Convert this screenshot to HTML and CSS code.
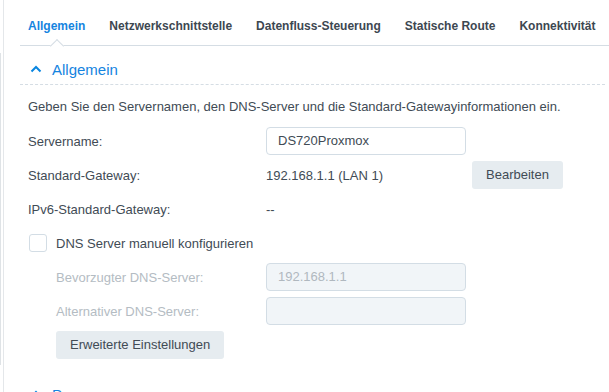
FILE: index.html
```html
<!DOCTYPE html>
<html lang="de">
<head>
<meta charset="utf-8">
<link rel="stylesheet" href="styles.css">
</head>
<body>
<div class="side-line"></div>
<div class="page">
  <div class="tabs">
    <div class="tab active">Allgemein<span class="notch"></span></div>
    <div class="tab">Netzwerkschnittstelle</div>
    <div class="tab">Datenfluss-Steuerung</div>
    <div class="tab">Statische Route</div>
    <div class="tab">Konnektivität</div>
  </div>
  <div class="section-head">
    <svg class="chev" width="12" height="8" viewBox="0 0 12 8"><path d="M1.5 6.5 L6 2 L10.5 6.5" fill="none" stroke="#0a86e0" stroke-width="2"/></svg>
    <span class="section-title">Allgemein</span>
  </div>
  <div class="content">
    <p class="desc">Geben Sie den Servernamen, den DNS-Server und die Standard-Gatewayinformationen ein.</p>
    <div class="row">
      <span class="label">Servername:</span>
      <div class="input">DS720Proxmox</div>
    </div>
    <div class="row">
      <span class="label">Standard-Gateway:</span>
      <span class="value">192.168.1.1 (LAN 1)</span>
      <span class="btn edit">Bearbeiten</span>
    </div>
    <div class="row">
      <span class="label">IPv6-Standard-Gateway:</span>
      <span class="value">--</span>
    </div>
    <div class="row check-row">
      <span class="checkbox"></span>
      <span class="check-label">DNS Server manuell konfigurieren</span>
    </div>
    <div class="row sub">
      <span class="label dim">Bevorzugter DNS-Server:</span>
      <div class="input disabled">192.168.1.1</div>
    </div>
    <div class="row sub">
      <span class="label dim">Alternativer DNS-Server:</span>
      <div class="input disabled"></div>
    </div>
    <div class="row sub btn-row">
      <span class="btn">Erweiterte Einstellungen</span>
    </div>
  </div>
  <div class="section-head next">
    <svg class="chev" width="12" height="8" viewBox="0 0 12 8"><path d="M1.5 6.5 L6 2 L10.5 6.5" fill="none" stroke="#0a86e0" stroke-width="2"/></svg>
    <span class="section-title">Proxy</span>
  </div>
</div>
</body>
</html>
```
FILE: styles.css
```css
html, body {
  margin: 0;
  padding: 0;
  background: #fff;
}
body {
  width: 609px;
  height: 392px;
  overflow: hidden;
  position: relative;
  font-family: "Liberation Sans", Arial, sans-serif;
  font-size: 13px;
  color: #414b55;
}
.side-line {
  position: absolute;
  left: 0;
  top: 53px;
  width: 1px;
  height: 312px;
  background: #dfe3e6;
}
.page {
  margin-left: 3px;
  border-left: 1px solid #e4e7ea;
  height: 392px;
  padding-left: 16px;
}
.tabs {
  display: flex;
  gap: 24px;
  padding: 18px 0 0 8px;
  height: 27px;
  border-bottom: 1px solid #d5dde4;
  white-space: nowrap;
}
.tab {
  position: relative;
  font-weight: bold;
  font-size: 12px;
  color: #3d4751;
  line-height: 16px;
}
.tab.active {
  color: #1584e0;
}
.notch {
  position: absolute;
  left: 50%;
  top: 23px;
  width: 9px;
  height: 9px;
  margin-left: -5px;
  background: #fff;
  border-left: 1px solid #d5dde4;
  border-top: 1px solid #d5dde4;
  transform: rotate(45deg);
}
.section-head {
  box-sizing: border-box;
  display: flex;
  align-items: center;
  height: 39px;
  padding-top: 9px;
  margin-right: 4px;
  border-bottom: 1px dashed #d5dde4;
  padding-left: 10px;
}
.chev {
  margin-right: 10px;
  margin-top: -1px;
}
.section-title {
  font-size: 15px;
  color: #1584e0;
}
.content {
  padding: 12px 0 0 8px;
}
.desc {
  margin: 0 0 10px;
  line-height: 20px;
}
.row {
  display: flex;
  align-items: center;
  height: 28px;
  margin-bottom: 6px;
}
.label {
  width: 238px;
  flex: none;
}
.sub {
  padding-left: 28px;
}
.sub .label {
  width: 210px;
}
.dim {
  color: #b4bcc3;
}
.input {
  box-sizing: border-box;
  width: 200px;
  height: 28px;
  border: 1px solid #d3dde5;
  border-radius: 4px;
  padding: 0 11px;
  line-height: 26px;
  color: #414b55;
}
.input.disabled {
  background: #f1f5f8;
  color: #b0b8bf;
}
.value {
  width: 206px;
  flex: none;
}
.btn {
  display: inline-block;
  height: 28px;
  line-height: 28px;
  padding: 0 14px;
  background: #e6ecf0;
  border-radius: 3px;
  color: #414b55;
}
.check-row {
  padding-left: 1px;
}
.checkbox {
  box-sizing: border-box;
  width: 18px;
  height: 18px;
  border: 1px solid #d3dde5;
  border-radius: 3px;
  margin-right: 9px;
}
.section-head.next {
  border-bottom: none;
  height: 46px;
  padding-top: 13px;
}
```
